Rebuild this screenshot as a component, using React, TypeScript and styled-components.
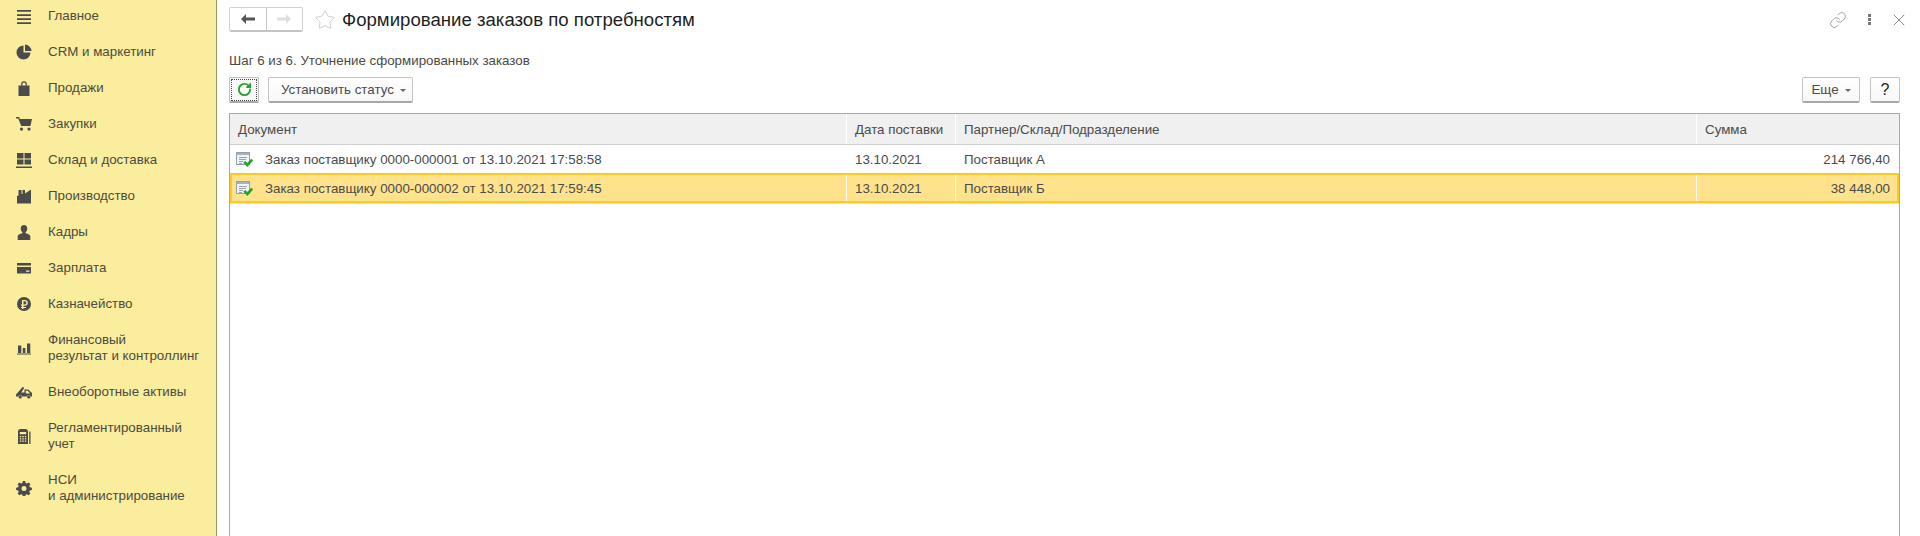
import React from 'react';
import styled, { createGlobalStyle } from 'styled-components';
import { Star, Link, X, RotateCw } from 'lucide-react';

const GlobalStyle = createGlobalStyle`
  html, body { margin: 0; padding: 0; height: 100%; background: #fff; overflow: hidden; }
  * { box-sizing: border-box; }
  body { font-family: "Liberation Sans", Arial, sans-serif; font-size: 13.33px; color: #4b4b4b; }
`;

const Icons: Record<string, React.ReactNode> = {
  menu: <path d="M1 2h14v1.800H1zM1 6.200h14v1.800H1zM1 10.300h14v1.800H1zM1 14.300h14v1.800H1z" />,
  pie: <path d="M7.500 1.500a7 7 0 1 0 7 7h-7zM9 0.500a7 7 0 0 1 6.500 6.500H9z" />,
  bag: <path d="M2.500 5.500h2.700V4a2.800 2.800 0 0 1 5.600 0v1.500h2.700V16h-11zM6.400 5.500h3.200V4a1.600 1.600 0 0 0-3.200 0z" fillRule="evenodd" />,
  cart: <path d="M0 1h3.200l.6 2H16l-1.600 7H5.200L2.300 2.400H0zM5.500 11.500a1.600 1.600 0 1 1 0 3.200 1.600 1.600 0 0 1 0-3.200zm7.500 0a1.600 1.600 0 1 1 0 3.200 1.600 1.600 0 0 1 0-3.200z" />,
  storage: <path d="M1 1h6.500v5.500H1zM8.500 1H15v5.500H8.500zM1 7.500h6.500v5H1zM8.500 7.500H15v5H8.500zM0 14.500h16V16H0z" />,
  factory: <path d="M1 15.500V8l1.500-.5V2h3v4h1V2H9v3.500l6-4v14z" />,
  person: <path d="M8 1c2 0 3.300 1.400 3.300 3.400 0 1.500-.8 3-1.700 3.800v1.100c2.800.5 4.700 1.600 4.700 3.200V16H1.700v-3.500c0-1.600 1.900-2.700 4.700-3.200V8.200C5.500 7.400 4.700 5.900 4.700 4.400 4.700 2.400 6 1 8 1z" />,
  card: <path d="M1 3h14v2.500H1zM1 7h14v6.500H1zm9 3.500v1.200h3.500v-1.200z" fillRule="evenodd" />,
  ruble: <path d="M8 1a7 7 0 1 1 0 14A7 7 0 0 1 8 1zM6 4v4.500H5v1.200h1V11H5v1h1v1h1.500v-1H10v-1H7.500V9.700h1.300c1.900 0 3-1 3-2.900C11.800 5 10.700 4 8.800 4zm1.500 1.200h1.200c1 0 1.600.5 1.600 1.600 0 1.200-.6 1.700-1.600 1.700H7.500z" fillRule="evenodd" />,
  chart: <path d="M2 5.500h3.300V13H2zM6.800 8h2.600v5H6.800zM11 3.500h3.300V13H11zM1 13.500h14v1.100H1z" />,
  truck: <path d="M0 10.500 5.800 4l1-1.200 1.400 1.200-3 4.500H8.500V5.500h3.700L16 9v3.500h-1.300a2 2 0 0 0-3.800 0H6.100a2 2 0 0 0-3.800 0H0zM9.800 6.700v2.800h4.400L11.800 6.700zM4.200 11.300a1.600 1.600 0 1 1 0 3.200 1.600 1.600 0 0 1 0-3.200zm8.600 0a1.600 1.600 0 1 1 0 3.200 1.600 1.600 0 0 1 0-3.200z" fillRule="evenodd" />,
  calc: <path d="M2 3.500C2 2 3 1 4.500 1h5C11 1 12 2 12 3.500V16H2zm1.800.5v2.200h6.400V4zM3.800 8v1.300h1.500V8zm2.500 0v1.300h1.500V8zm2.500 0v1.300h1.400V8zm-5 2.300v1.300h1.500v-1.300zm2.500 0v1.300h1.500v-1.300zm2.500 0v1.300h1.400v-1.300zm-5 2.300v1.200h1.500v-1.200zm2.500 0v1.200h1.500v-1.200zm2.500 0v1.200h1.400v-1.200zM13.200 3.500H14.500V16h-1.300z" fillRule="evenodd" />,
  gear: <path d="M6.800 1h2.400l.4 2 1.300.6 1.800-1.100 1.700 1.700-1.100 1.800.6 1.300 2 .4v2.400l-2 .4-.6 1.300 1.100 1.800-1.700 1.700-1.800-1.100-1.300.6-.4 2H6.800l-.4-2-1.300-.6-1.800 1.100-1.700-1.700 1.100-1.800-.6-1.300-2-.4V7.700l2-.4.6-1.300-1.100-1.800 1.700-1.700 1.800 1.100 1.300-.6zM8 6a2.500 2.500 0 1 0 0 5 2.500 2.500 0 0 0 0-5z" fillRule="evenodd" />,
};

const menuItems: { icon: string; lines: string[] }[] = [
  { icon: 'menu', lines: ['Главное'] },
  { icon: 'pie', lines: ['CRM и маркетинг'] },
  { icon: 'bag', lines: ['Продажи'] },
  { icon: 'cart', lines: ['Закупки'] },
  { icon: 'storage', lines: ['Склад и доставка'] },
  { icon: 'factory', lines: ['Производство'] },
  { icon: 'person', lines: ['Кадры'] },
  { icon: 'card', lines: ['Зарплата'] },
  { icon: 'ruble', lines: ['Казначейство'] },
  { icon: 'chart', lines: ['Финансовый', 'результат и контроллинг'] },
  { icon: 'truck', lines: ['Внеоборотные активы'] },
  { icon: 'calc', lines: ['Регламентированный', 'учет'] },
  { icon: 'gear', lines: ['НСИ', 'и администрирование'] },
];

const rows = [
  { doc: 'Заказ поставщику 0000-000001 от 13.10.2021 17:58:58', date: '13.10.2021', partner: 'Поставщик А', sum: '214 766,40' },
  { doc: 'Заказ поставщику 0000-000002 от 13.10.2021 17:59:45', date: '13.10.2021', partner: 'Поставщик Б', sum: '38 448,00' },
];

const DocIcon = () => (
  <svg width="17" height="15" viewBox="0 0 17 15">
    <rect x="0.500" y="0.500" width="13" height="12" fill="#f2f5f7" stroke="#94a0ab" />
    <rect x="1" y="1" width="12" height="2" fill="#a7b4bf" />
    <path d="M3 5.500h8M3 7.500h7M3 9.500h4M3 11.500h3" stroke="#97a2ac" />
    <path d="M8.300 9.800l3 3.200 4.900-5.400" fill="none" stroke="#25a52d" strokeWidth="2.700" />
  </svg>
);

const NavArrow = ({ color, flip }: { color: string; flip?: boolean }) => (
  <svg width="14" height="10" viewBox="0 0 14 10" style={flip ? { transform: 'scaleX(-1)' } : undefined}>
    <path d="M0 5l5-5v3.400h9v3.200H5V10z" fill={color} />
  </svg>
);

export default function App() {
  return (
    <Page>
      <GlobalStyle />
      <Sidebar>
        {menuItems.map((item) => (
          <MenuItem key={item.icon} $double={item.lines.length > 1}>
            <MenuIcon viewBox="0 0 16 16">{Icons[item.icon]}</MenuIcon>
            <MenuLabel>
              {item.lines.map((line) => (
                <div key={line}>{line}</div>
              ))}
            </MenuLabel>
          </MenuItem>
        ))}
      </Sidebar>
      <Main>
        <TitleBar>
          <NavGroup>
            <NavButton>
              <NavArrow color="#555" />
            </NavButton>
            <NavButton>
              <NavArrow color="#dedede" flip />
            </NavButton>
          </NavGroup>
          <StarIcon>
            <Star size={22} strokeWidth={0.900} color="#c4c4c4" />
          </StarIcon>
          <Title>Формирование заказов по потребностям</Title>
          <TitleTools>
            <Link size={18} strokeWidth={1.200} color="#999" />
            <Dots>
              <i />
              <i />
              <i />
            </Dots>
            <CloseBox>
              <X size={20} strokeWidth={1} color="#777" />
            </CloseBox>
          </TitleTools>
        </TitleBar>
        <StepText>Шаг 6 из 6. Уточнение сформированных заказов</StepText>
        <Toolbar>
          <RefreshButton>
            <RotateCw size={15} strokeWidth={3} color="#2f9e33" />
          </RefreshButton>
          <Button>
            Установить статус <Caret />
          </Button>
          <Spacer />
          <Button $narrow>
            Еще <Caret />
          </Button>
          <HelpButton>?</HelpButton>
        </Toolbar>
        <Table>
          <HeadRow>
            <HeadCell>Документ</HeadCell>
            <HeadCell>Дата поставки</HeadCell>
            <HeadCell>Партнер/Склад/Подразделение</HeadCell>
            <HeadCell>Сумма</HeadCell>
          </HeadRow>
          {rows.map((row, i) => (
            <DataRow key={row.doc} $selected={i === 1}>
              <DocCell>
                <DocIcon />
                {row.doc}
              </DocCell>
              <Cell>{row.date}</Cell>
              <Cell>{row.partner}</Cell>
              <SumCell>{row.sum}</SumCell>
            </DataRow>
          ))}
        </Table>
      </Main>
    </Page>
  );
}

const Page = styled.div`
  display: flex;
  width: 1920px;
  height: 536px;
  overflow: hidden;
`;
const Sidebar = styled.nav`
  flex: 0 0 217px;
  height: 536px;
  background: #fbed9e;
  border-right: 1px solid #9a9468;
  overflow: hidden;
`;
const MenuItem = styled.div<{ $double?: boolean }>`
  display: flex;
  align-items: center;
  height: ${(p) => (p.$double ? '52px' : '36px')};
  padding-left: 16px;
  position: relative;
  top: -2px;
`;
const MenuIcon = styled.svg`
  flex: 0 0 16px;
  width: 16px;
  height: 16px;
  fill: #4b4b4b;
`;
const MenuLabel = styled.div`
  margin-left: 16px;
  font-size: 13.33px;
  line-height: 16.500px;
  color: #4b4b3f;
`;
const Main = styled.main`
  flex: 1;
  min-width: 0;
  padding: 0 20px 0 12px;
  height: 536px;
  overflow: hidden;
`;
const TitleBar = styled.header`
  display: flex;
  align-items: center;
  height: 39px;
`;
const NavGroup = styled.div`
  display: flex;
  width: 74px;
  height: 25px;
  border: 1px solid #d2d2d2;
  border-bottom: 2px solid #c4c4c4;
  border-radius: 2px;
`;
const NavButton = styled.div`
  flex: 1;
  display: flex;
  align-items: center;
  justify-content: center;
  &:first-child {
    border-right: 1px solid #c8c8c8;
  }
`;
const StarIcon = styled.div`
  display: flex;
  margin-left: 11px;
`;
const Title = styled.h1`
  margin: 0 0 0 6px;
  font-size: 18.620px;
  font-weight: 400;
  color: #1f1f1f;
`;
const TitleTools = styled.div`
  display: flex;
  align-items: center;
  margin-left: auto;
  margin-right: -9px;
`;
const Dots = styled.span`
  display: flex;
  flex-direction: column;
  gap: 1px;
  margin: 0 18px 0 21px;
  i {
    width: 3px;
    height: 3px;
    background: #777;
  }
`;
const CloseBox = styled.span`
  display: flex;
`;
const StepText = styled.div`
  height: 38px;
  padding-top: 14px;
  font-size: 13.33px;
  line-height: 15px;
  color: #4b4b3f;
`;
const Toolbar = styled.div`
  display: flex;
  align-items: flex-start;
  height: 36px;
`;
const Button = styled.div<{ $narrow?: boolean }>`
  display: flex;
  align-items: center;
  justify-content: ${(p) => (p.$narrow ? 'center' : 'flex-start')};
  gap: 6px;
  height: 26px;
  width: ${(p) => (p.$narrow ? '58px' : '145px')};
  margin-left: ${(p) => (p.$narrow ? '0' : '9px')};
  padding-left: ${(p) => (p.$narrow ? '0' : '12px')};
  font-size: 13.33px;
  color: #4b4b4b;
  background: linear-gradient(#ffffff, #f7f7f7);
  border: 1px solid #c4c4c4;
  border-bottom: 2px solid #a8a8a8;
  border-radius: 2px;
`;
const RefreshButton = styled.div`
  display: flex;
  align-items: center;
  justify-content: center;
  width: 30px;
  height: 26px;
  background: #f9f9f9;
  border: 1px solid #bbb;
  border-bottom: 2px solid #a8a8a8;
  border-radius: 2px;
  outline: 1px dotted #444;
  outline-offset: -3px;
`;
const HelpButton = styled(Button)`
  width: 30px;
  margin-left: 10px;
  padding-left: 0;
  justify-content: center;
  font-size: 16px;
  color: #222;
`;
const Caret = styled.i`
  display: inline-block;
  border-left: 3px solid transparent;
  border-right: 3px solid transparent;
  border-top: 3px solid #666;
  margin-top: 2px;
`;
const Spacer = styled.div`
  flex: 1;
`;
const Table = styled.section`
  width: 1671px;
  height: 430px;
  border: 1px solid #a8a8a8;
  border-bottom: 0;
  font-size: 13.33px;
`;
const columns = 'grid-template-columns: 617px 109px 741px 1fr;';
const HeadRow = styled.div`
  display: grid;
  ${columns}
  height: 31px;
  background: #f0f0f0;
  border-bottom: 1px solid #cfcfcf;
`;
const HeadCell = styled.div`
  display: flex;
  align-items: center;
  padding-left: 8px;
  color: #4b4b4b;
  border-right: 1px solid #fff;
  &:last-child {
    border-right: 0;
  }
`;
const DataRow = styled.div<{ $selected?: boolean }>`
  display: grid;
  ${columns}
  height: ${(p) => (p.$selected ? '30px' : '28px')};
  background: ${(p) => (p.$selected ? '#fee28c' : '#fff')};
  box-shadow: ${(p) => (p.$selected ? 'inset 0 0 0 2px #fdc923, 0 1px 0 #e2e2e2' : 'none')};
  color: #4b4b4b;
`;
const Cell = styled.div`
  display: flex;
  align-items: center;
  padding-left: 8px;
  margin: 2px 0;
  border-right: 1px solid rgba(255, 255, 255, 0.800);
`;
const DocCell = styled(Cell)`
  gap: 12px;
  padding-left: 6px;
`;
const SumCell = styled(Cell)`
  justify-content: flex-end;
  padding-right: 9px;
  border-right: 0;
`;
